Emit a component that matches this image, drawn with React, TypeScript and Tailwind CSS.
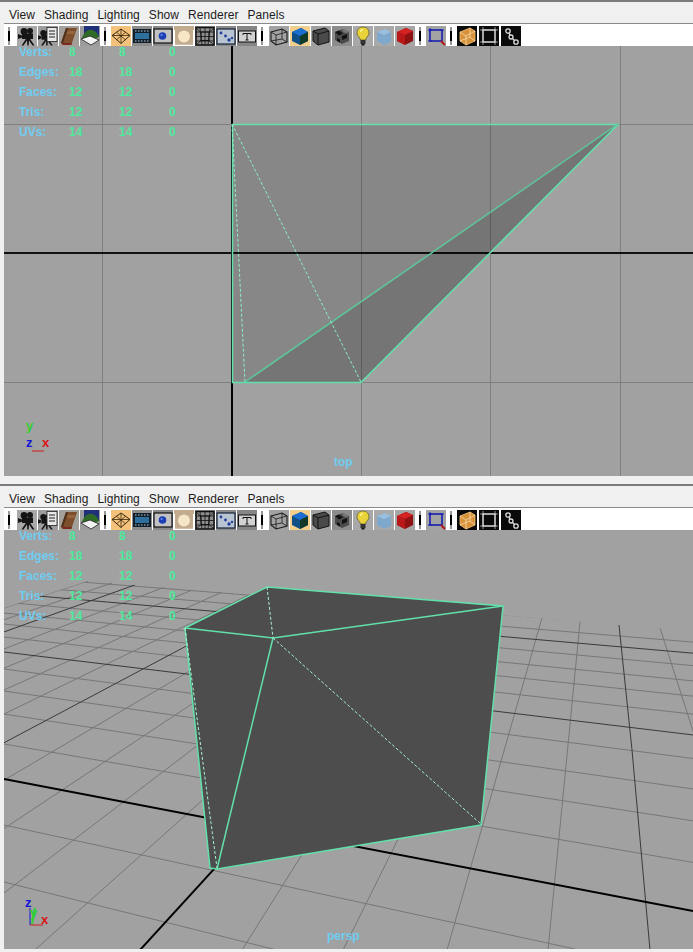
import React from 'react';

const EDGE = '#62e0aa';
const FONT = "font-['Liberation_Sans',Arial,sans-serif]";

const menuItems = ['View', 'Shading', 'Lighting', 'Show', 'Renderer', 'Panels'];

const hudRows = [
  ['Verts:', '8', '8', '0'],
  ['Edges:', '18', '18', '0'],
  ['Faces:', '12', '12', '0'],
  ['Tris:', '12', '12', '0'],
  ['UVs:', '14', '14', '0'],
];

// toolbar icons, 20x20 each
const Ico: React.FC<{ bg?: string; children?: React.ReactNode }> = ({ bg = '#9a9a9a', children }) => (
  <svg width="20" height="20" viewBox="0 0 20 20" className="block shrink-0">
    <rect width="20" height="20" fill={bg} />
    {children}
  </svg>
);

const Camera = () => (
  <g fill="#151515">
    <circle cx="7" cy="5.5" r="3.4" />
    <circle cx="13" cy="5" r="3" />
    <rect x="5" y="7.500" width="11" height="5.500" />
    <path d="M1 8l4 1.500v2L1 13z" />
    <path d="M9.500 12l-5 7.500h2l3.500-5 .3 5h1.400l.3-5 3.500 5h2l-5-7.500z" />
  </g>
);

const icons: React.ReactNode[][] = [
  [
    <Ico bg="#a8a8a8" key="cam"><Camera /></Ico>,
    <Ico bg="#9c9c9c" key="camnotes">
      <g transform="translate(-1 2) scale(.9)"><Camera /></g>
      <rect x="9" y="1.500" width="10" height="14" fill="#e8e8e8" stroke="#222" strokeWidth=".8" />
      <path d="M11 5h6M11 8h6M11 11h6" stroke="#222" strokeWidth="1" />
    </Ico>,
    <Ico bg="#a3a09c" key="book">
      <path d="M7 2h11l-5 15H2z" fill="#7d4f2c" />
      <path d="M2 17l5-15 2 0-5 15z" fill="#4e2f1a" />
      <path d="M2 17h11l-.5 2H4z" fill="#7a2a22" />
      <path d="M9 5h7l-1 3H8z" fill="#96663f" />
    </Ico>,
    <Ico bg="#9c9c9c" key="scene">
      <rect x="4" y="0" width="15" height="11" fill="#1f2f7a" />
      <path d="M2 12c2-6 6-9 10-8s6 4 7 7l-8 4z" fill="#2f6b26" />
      <path d="M1 13l10 6 8-5-9-4z" fill="#f2f2f2" stroke="#222" strokeWidth=".8" />
    </Ico>,
  ],
  [
    <Ico bg="#f4c27a" key="grid">
      <path d="M10 3l9 6.500-9 8-9-8z" fill="none" stroke="#3a2a12" strokeWidth="1" />
      <path d="M5.500 6.250l9 7.500M14.500 6.250l-9 7.500M1 9.500h18M10 3v14.500" stroke="#3a2a12" strokeWidth=".8" />
    </Ico>,
    <Ico bg="#8d8d8d" key="film">
      <rect x="1" y="3" width="18" height="14" fill="#12202c" />
      <rect x="3" y="7" width="14" height="6" fill="#2f6f9e" />
      <path d="M3 5h14M3 15h14" stroke="#b8c8d4" strokeWidth="1" strokeDasharray="1.500 1.500" />
    </Ico>,
    <Ico bg="#8a8a8a" key="sphere">
      <rect x="1" y="3" width="18" height="14" fill="#c2c2c2" stroke="#111" strokeWidth="1.200" />
      <circle cx="9.500" cy="10" r="3.800" fill="#1c3fb5" />
      <circle cx="8.600" cy="9" r="1.100" fill="#6f8be8" />
    </Ico>,
    <Ico bg="#c2ab8e" key="ball">
      <circle cx="10" cy="10.500" r="6" fill="#f6e6c6" />
      <path d="M0 19.500h20" stroke="#fff" strokeWidth="1.500" />
      <path d="M.5 4v16M19.500 4v16" stroke="#fff" strokeWidth="1" />
    </Ico>,
    <Ico bg="#8e8e8e" key="wirebox">
      <rect x="1" y="1.500" width="18" height="17.500" fill="none" stroke="#111" strokeWidth="1.500" />
      <rect x="6" y="6" width="8" height="8.500" fill="none" stroke="#111" />
      <path d="M1 2l5 4.500M19 2l-5 4.500M1 19l5-4.500M19 19l-5-4.500M10 2v17M1 10.500h18M5 2l2 17M15 2l-2 17M1 6h18M1 15h18" stroke="#111" strokeWidth=".8" />
    </Ico>,
    <Ico bg="#8a8a8a" key="dots">
      <rect x="1" y="3" width="18" height="15" fill="#b9c4d2" stroke="#16243a" strokeWidth="1.200" />
      <circle cx="5" cy="7" r="1.400" fill="#1f3f9a" />
      <circle cx="9.500" cy="10" r="1.400" fill="#1f3f9a" />
      <circle cx="13" cy="14" r="1.700" fill="#1f3f9a" />
      <circle cx="16" cy="12" r="1.200" fill="#1f3f9a" />
    </Ico>,
    <Ico bg="#858585" key="tbox">
      <rect x="1.500" y="5" width="17" height="11" fill="#d2d2d2" stroke="#111" strokeWidth="1" />
      <path d="M6 7.500h8v1.500M10 7.500v6.500M8.500 14h3M6 7.500V9" fill="none" stroke="#111" strokeWidth="1" />
    </Ico>,
  ],
  [
    <Ico bg="#a2a2a2" key="wirecube">
      <path d="M2 6l11-3 5 3v10l-11 3-5-4z" fill="none" stroke="#1b1b1b" strokeWidth="1.100" />
      <path d="M2 6l5 3 11-3M7 9v10M13 3v10l5 3M13 13L2 15" fill="none" stroke="#1b1b1b" strokeWidth=".8" />
    </Ico>,
    <Ico bg="#f3cf8e" key="bluecube">
      <path d="M2 6l9-4 7 4v9l-8 4-8-4z" fill="#0f4f86" />
      <path d="M2 6l9-4 7 4-8 4z" fill="#1c6fd0" />
      <path d="M10 10l8-4v9l-8 4z" fill="#123a28" />
    </Ico>,
    <Ico bg="#a0a0a0" key="graycube">
      <path d="M2 5l12-3 4 3v11l-11 3-5-4z" fill="#4a4a4a" stroke="#141414" />
      <path d="M2 5l5 3 11-3M7 8v11" fill="none" stroke="#141414" />
    </Ico>,
    <Ico bg="#8c8c8c" key="checkcube">
      <path d="M3 6l8-3 6 3v9l-7 3-7-4z" fill="#4a4a4a" />
      <path d="M3 6l4-1.500 4 3-4 2zM10 10l5-2v4l-5 2zM5 12l3 1.500v3l-3-1.500z" fill="#111" />
      <path d="M11 3l6 3-3 1.500-4-2.500z" fill="#777" />
    </Ico>,
    <Ico bg="#a8a8a8" key="bulb">
      <path d="M10 1c4 0 6 3 6 6 0 3-3 4-3.500 7h-5C7 11 4 10 4 7c0-3 2-6 6-6z" fill="#e8d43a" stroke="#5a5220" strokeWidth=".7" />
      <path d="M7.500 6c0-1.500 1-2.500 2.500-2.500" stroke="#fff6a8" strokeWidth="1.200" fill="none" />
      <rect x="7.500" y="14" width="5" height="4" fill="#333" />
      <rect x="8.500" y="18" width="3" height="1.500" fill="#111" />
    </Ico>,
    <Ico bg="#a9a9a9" key="lightcube">
      <path d="M3 6l8-3 6 3v10l-7 3-7-4z" fill="#7fa9cc" />
      <path d="M3 6l8-3 6 3-7 3z" fill="#9bbfdc" />
    </Ico>,
    <Ico bg="#a6a6a6" key="redcube">
      <path d="M2 6l9-4 7 3v10l-8 4-8-4z" fill="#8e1212" />
      <path d="M2 6l9-4 7 3-8 4z" fill="#d42222" />
      <path d="M2 6l8 3v10l-8-4z" fill="#b81818" />
    </Ico>,
  ],
  [
    <Ico bg="#a3a3a3" key="rect">
      <rect x="4" y="4" width="12" height="11" fill="none" stroke="#1820b0" strokeWidth="1.600" />
      <path d="M15 15l4 4" stroke="#b01818" strokeWidth="2" />
      <path d="M2 4h4M4 2v4M14 4h4M2 15h4" stroke="#1820b0" strokeWidth="1" />
    </Ico>,
  ],
  [
    <Ico bg="#0a0a0a" key="orangecube">
      <path d="M3 6l10-4 5 3v10l-9 4-6-4z" fill="#d8923a" stroke="#f4c27a" strokeWidth=".8" />
      <path d="M3 6l6 4 9-5M9 10v9M13 2v9l5 4M13 11l-10 4" fill="none" stroke="#f8dcae" strokeWidth=".8" />
    </Ico>,
    <Ico bg="#0a0a0a" key="whitebox">
      <rect x="4" y="4" width="12" height="12" fill="none" stroke="#e8e8e8" strokeWidth="1.200" />
      <path d="M1 4h18M1 16h18M4 1v18M16 1v18" stroke="#d8d8d8" strokeWidth=".7" />
    </Ico>,
    <Ico bg="#0a0a0a" key="chain">
      <circle cx="7" cy="5" r="2.200" fill="none" stroke="#ddd" strokeWidth="1.300" />
      <circle cx="10" cy="11" r="2" fill="none" stroke="#ddd" strokeWidth="1.300" />
      <circle cx="15" cy="16" r="2.200" fill="none" stroke="#ddd" strokeWidth="1.300" />
      <path d="M8 7l1 2.500M11.500 12.500l2 2" stroke="#ddd" strokeWidth="1.300" />
    </Ico>,
  ],
];

const Sep = () => (
  <svg width="2" height="20" viewBox="0 0 2 20" className="block shrink-0 ml-1 mr-[5px]">
    <rect x=".5" y="1" width="1" height="18" fill="#333" />
    <rect x="0" y="5" width="2" height="10" fill="#000" />
  </svg>
);

const MenuBar = () => (
  <div className="h-[21px] flex items-center gap-[9px] pl-[5px] pt-[4px] text-[12px] tracking-[0.05px] text-[#1c1c1c] bg-[#f0f0f0] border-b border-[#8a8a8a]">
    {menuItems.map((m) => (
      <span key={m}>{m}</span>
    ))}
  </div>
);

const groupClass = ['flex gap-px ml-[2px]', 'flex gap-px', 'flex gap-px ml-px', 'flex gap-px', 'flex gap-[2px]'];

const Toolbar = () => (
  <div className="h-[22px] flex items-center pt-[1px] bg-white">
    {icons.map((group, i) => (
      <React.Fragment key={i}>
        <Sep />
        <div className={groupClass[i]}>{group}</div>
      </React.Fragment>
    ))}
  </div>
);

const Hud = () => (
  <div className="absolute left-0 top-0 pl-[15px] grid grid-cols-[50px_50px_50px_20px] auto-rows-[20px] items-center text-[12px] leading-none font-bold -mt-[4px]">
    {hudRows.map((r) => (
      <React.Fragment key={r[0]}>
        <span className="text-[#6fcdf2]">{r[0]}</span>
        <span className="text-[#4fe89c]">{r[1]}</span>
        <span className="text-[#4fe89c]">{r[2]}</span>
        <span className="text-[#4fe89c]">{r[3]}</span>
      </React.Fragment>
    ))}
  </div>
);

const TopScene = () => (
  <svg width="689" height="430" viewBox="4 46 689 430" className="block">
    <g stroke="#7f7f7f" strokeWidth="1">
      {[102.5, 361.5, 490.5, 620.5].map((x) => (
        <line key={x} x1={x} y1="46" x2={x} y2="476" />
      ))}
      {[124.5, 382.5].map((y) => (
        <line key={y} x1="4" y1={y} x2="693" y2={y} />
      ))}
    </g>
    <line x1="4" y1="253" x2="693" y2="253" stroke="#111" strokeWidth="2" />
    <line x1="232" y1="46" x2="232" y2="476" stroke="#000" strokeWidth="2" />
    <polygon points="232,124 618,124 361,382 232,382" fill="#000" fillOpacity=".16" />
    <polygon points="245,382 618,124 361,382" fill="#000" fillOpacity=".13" />
    <g fill="none" stroke={EDGE}>
      <polygon points="232.500,124.500 618,124.500 361,382.500 232.500,382.500" strokeWidth="1.500" />
      <line x1="245" y1="382" x2="618" y2="124" stroke="#5cc79a" strokeWidth="1.500" />
      <g stroke="#8ff0c4" strokeDasharray="3 2" strokeWidth="1">
        <line x1="232" y1="124" x2="361" y2="382" />
        <line x1="232" y1="124" x2="245" y2="382" />
      </g>
    </g>
  </svg>
);

// persp grid: rows meet far to the left, columns meet near (650,400)
const rowY = [576, 585, 593, 602, 613, 624, 637, 652, 669, 691, 714, 744, 779, 825, 882];
const rowDark = [593, 652];
const rowLine = (y4: number) => {
  const s = (y4 - 437) * 0.00056;
  return { y1: y4, y2: y4 + s * 689 };
};
const colF = [88, 112, 135, 164, 193, 222, 250, 279, 311, 345, 381, 417, 452];
const colDark = [135, 279];
const colLine = (f: number) => {
  const fy = 581 + 0.083 * (f - 88);
  const k = (fy - 400) / (f - 650);
  const x2 = -100;
  return { x1: f, y1: fy, x2, y2: fy + k * (x2 - f) };
};

const PerspScene = () => (
  <svg width="689" height="419" viewBox="4 530 689 419" className="block">
    <defs>
      <clipPath id="gridClip">
        <polygon points="88,581 693,631 693,949 4,949 4,608" />
      </clipPath>
    </defs>
    <g clipPath="url(#gridClip)" fill="none">
      <g stroke="#777" strokeWidth="1">
        {rowY.filter((y) => y !== 779 && !rowDark.includes(y)).map((y) => {
          const l = rowLine(y);
          return <line key={y} x1="4" y1={l.y1} x2="693" y2={l.y2} />;
        })}
        {colF.filter((f) => f !== 452 && !colDark.includes(f)).map((f) => {
          const l = colLine(f);
          return <line key={f} x1={l.x1} y1={l.y1} x2={l.x2} y2={l.y2} />;
        })}
        <line x1="242" y1="950" x2="330" y2="810" />
        <line x1="343" y1="950" x2="420" y2="795" />
        <line x1="447" y1="950" x2="542" y2="618" />
        <line x1="548" y1="950" x2="580" y2="622" />
        <line x1="660" y1="628" x2="720" y2="815" />
      </g>
      <g stroke="#3a3a3a" strokeWidth="1">
        {rowDark.map((y) => {
          const l = rowLine(y);
          return <line key={y} x1="4" y1={l.y1} x2="693" y2={l.y2} />;
        })}
        {colDark.map((f) => {
          const l = colLine(f);
          return <line key={f} x1={l.x1} y1={l.y1} x2={l.x2} y2={l.y2} />;
        })}
        <polyline points="619,625 632,750 650,950" />
      </g>
      <line x1="4" y1="779" x2="693" y2="911" stroke="#000" strokeWidth="2" />
      <line x1="140" y1="950" x2="300" y2="775" stroke="#000" strokeWidth="2" />
    </g>
    <polygon points="185,628 267,587 503,606 481,825 217,869 210,868" fill="#4d4d4d" />
    <g fill="none" stroke={EDGE} strokeWidth="1.500">
      <polygon points="185,628 267,587 503,606 481,825 217,869 210,868" />
      <polyline points="185,628 273,638 503,606" />
      <line x1="273" y1="638" x2="217" y2="869" />
    </g>
    <g fill="none" stroke="#a8f2d0" strokeWidth="1" strokeDasharray="3 2">
      <line x1="267" y1="587" x2="273" y2="638" />
      <line x1="273" y1="638" x2="482" y2="825" />
      <line x1="185" y1="628" x2="217" y2="868" />
    </g>
  </svg>
);

const TopAxis = () => (
  <svg width="40" height="40" viewBox="0 0 40 40" className="absolute left-[20px] top-[372px]">
    <path d="M8 33h12" stroke="#d01818" strokeWidth="1" />
    <text x="2" y="12" fontSize="13" fontWeight="bold" fill="#2fd02f">y</text>
    <text x="2" y="29" fontSize="13" fontWeight="bold" fill="#1414d8">z</text>
    <text x="18" y="29" fontSize="13" fontWeight="bold" fill="#d81414">x</text>
  </svg>
);

const PerspAxis = () => (
  <svg width="40" height="40" viewBox="0 0 40 40" className="absolute left-[19px] top-[363px]">
    <path d="M7 15v17" stroke="#1414d8" strokeWidth="1" />
    <path d="M7 32h13" stroke="#d01818" strokeWidth="1" />
    <path d="M9 31l3-16" stroke="#2fd02f" strokeWidth="2" />
    <text x="2" y="14" fontSize="13" fontWeight="bold" fill="#1414d8">z</text>
    <text x="7" y="24" fontSize="13" fontWeight="bold" fill="#2fd02f">y</text>
    <text x="18" y="31" fontSize="13" fontWeight="bold" fill="#d81414">x</text>
  </svg>
);

const Pane: React.FC<{ label: string; labelClass: string; height: string; children: React.ReactNode }> = ({
  label,
  labelClass,
  height,
  children,
}) => (
  <div className="flex flex-col">
    <div className="h-[3px] -ml-[4px] bg-[#7c7c7c] border-b border-[#f0f0f0]" />
    <MenuBar />
    <Toolbar />
    <div className={`relative bg-[#a1a1a1] overflow-hidden ${height}`}>
      {children}
      <Hud />
      <span className={`absolute text-[12px] leading-none font-bold text-[#6fcdf2] ${labelClass}`}>{label}</span>
    </div>
  </div>
);

export default function App() {
  return (
    <div className={`w-[693px] h-[952px] overflow-hidden bg-[#f0f0f0] pl-[4px] ${FONT}`}>
      <Pane label="top" labelClass="left-[330px] top-[410px]" height="h-[430px]">
        <TopScene />
        <TopAxis />
      </Pane>
      <div className="h-[8px]" />
      <Pane label="persp" labelClass="left-[323px] top-[400px]" height="h-[419px]">
        <PerspScene />
        <PerspAxis />
      </Pane>
    </div>
  );
}
